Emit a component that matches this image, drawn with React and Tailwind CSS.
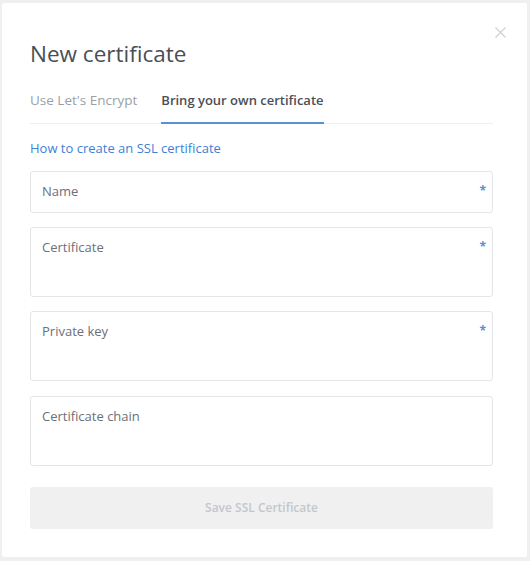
export default function App() {
  const font = { fontFamily: '"Open Sans", "Liberation Sans", sans-serif' };
  const Field = ({ label, required, tall, extra }) => (
    <div
      className={`flex items-start justify-between rounded-[3px] border border-[#e3e5e8] bg-white pl-[11px] pr-[6px] ${
        tall ? "h-[70px] pt-[10px]" : "h-[42px] pt-[10px]"
      } ${extra || ""}`}
    >
      <span className="text-[13px] leading-[18px] text-[#6b7079]">{label}</span>
      {required && <span className="text-[12px] leading-[18px] font-bold text-[#5a8fd6]">*</span>}
    </div>
  );
  return (
    <div className="h-[561px] w-[530px] bg-[#efefef] pt-[3px] pl-[2px]" style={font}>
      <div className="relative h-[554px] w-[525px] rounded-[2px] bg-white pl-[28px] pr-[34px]">
        <svg
          className="absolute left-[493px] top-[24px]"
          width="11"
          height="11"
          viewBox="0 0 11 11"
          fill="none"
          stroke="#cfd2d6"
          strokeWidth="1.3"
        >
          <path d="M0.5 0.5 L10.5 10.5 M10.5 0.5 L0.5 10.5" />
        </svg>
        <div className="pt-[37px] text-[22.5px] leading-[28px] text-[#4a4f57]">New certificate</div>
        <div className="mt-[23px] flex border-b border-[#eceef0]">
          <div className="pb-[14px] pr-[24px] text-[13.5px] leading-[18px] text-[#9ba0a7]">Use Let's Encrypt</div>
          <div className="-mb-px border-b-2 border-[#5b8fd6] pb-[13px] text-[13px] font-semibold leading-[18px] text-[#4a4f57]">
            Bring your own certificate
          </div>
        </div>
        <div className="mt-[15px] text-[13px] leading-[18px] text-[#3f7fd4]">How to create an SSL certificate</div>
        <div className="mt-[14px] flex flex-col gap-[14px]">
          <Field label="Name" required />
          <Field label="Certificate" required tall />
          <Field label="Private key" required tall />
          <Field label="Certificate chain" tall extra="mt-px" />
        </div>
        <div className="mt-[21px] flex h-[42px] items-center justify-center rounded-[3px] bg-[#f0f0f0] text-[12px] font-semibold text-[#c3c7cd]">
          Save SSL Certificate
        </div>
      </div>
    </div>
  );
}
